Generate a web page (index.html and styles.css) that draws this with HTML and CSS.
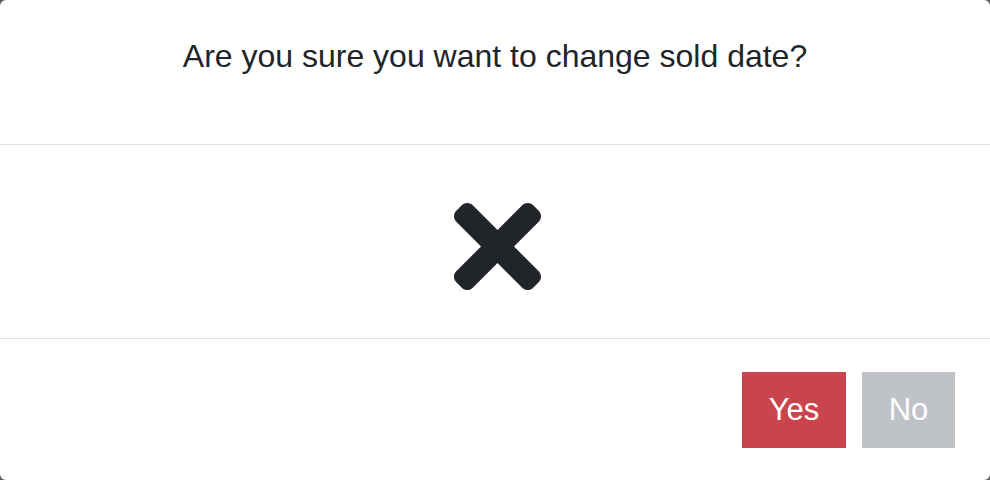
FILE: index.html
```html
<!DOCTYPE html>
<html>
<head>
<meta charset="utf-8">
<link rel="stylesheet" href="styles.css">
</head>
<body>
<div class="modal">
  <div class="modal-header">
    <h1 class="title">Are you sure you want to change sold date?</h1>
  </div>
  <div class="modal-body">
    <svg class="icon-x" viewBox="0 80 352 352" width="87" height="87" aria-hidden="true">
      <path fill="#212529" d="M242.72 256l100.07-100.07c12.28-12.28 12.28-32.19 0-44.48l-22.24-22.24c-12.28-12.28-32.19-12.28-44.48 0L176 189.28 75.930 89.21c-12.28-12.28-32.19-12.28-44.48 0L9.21 111.45c-12.28 12.28-12.28 32.19 0 44.48L109.28 256 9.21 356.07c-12.28 12.280-12.28 32.19 0 44.48l22.24 22.240c12.28 12.28 32.2 12.28 44.48 0L176 322.72l100.07 100.07c12.28 12.28 32.2 12.28 44.48 0l22.24-22.24c12.28-12.28 12.28-32.19 0-44.48L242.72 256z"/>
    </svg>
  </div>
  <div class="modal-footer">
    <button class="btn btn-yes">Yes</button>
    <button class="btn btn-no">No</button>
  </div>
</div>
</body>
</html>
```
FILE: styles.css
```css
html, body {
  margin: 0;
  padding: 0;
  height: 100%;
}
body {
  background: #5a5a5a;
  font-family: "Liberation Sans", Arial, sans-serif;
  color: #212529;
}
.modal {
  height: 480px;
  background: #fff;
  border-radius: 6px;
  display: flex;
  flex-direction: column;
  overflow: hidden;
}
.modal-header {
  height: 145px;
  box-sizing: border-box;
  border-bottom: 1px solid #dee2e6;
  display: flex;
  justify-content: center;
}
.title {
  margin: 37px 0 0;
  font-size: 32px;
  font-weight: 400;
  line-height: 38px;
}
.modal-body {
  height: 194px;
  box-sizing: border-box;
  border-bottom: 1px solid #dee2e6;
  display: flex;
  justify-content: center;
  align-items: center;
}
.icon-x {
  display: block;
  margin: 10px 0 0 4px;
}
.modal-footer {
  flex: 1;
  display: flex;
  justify-content: flex-end;
  align-items: flex-start;
  gap: 16px;
  padding: 33px 35px 0 0;
}
.btn {
  border: 0;
  height: 76px;
  font-family: "Liberation Sans", Arial, sans-serif;
  font-size: 31px;
  color: #fff;
  padding: 0;
  cursor: pointer;
}
.btn-yes {
  width: 104px;
  background: #c9444c;
}
.btn-no {
  width: 93px;
  background: #bfc3c7;
}
```
